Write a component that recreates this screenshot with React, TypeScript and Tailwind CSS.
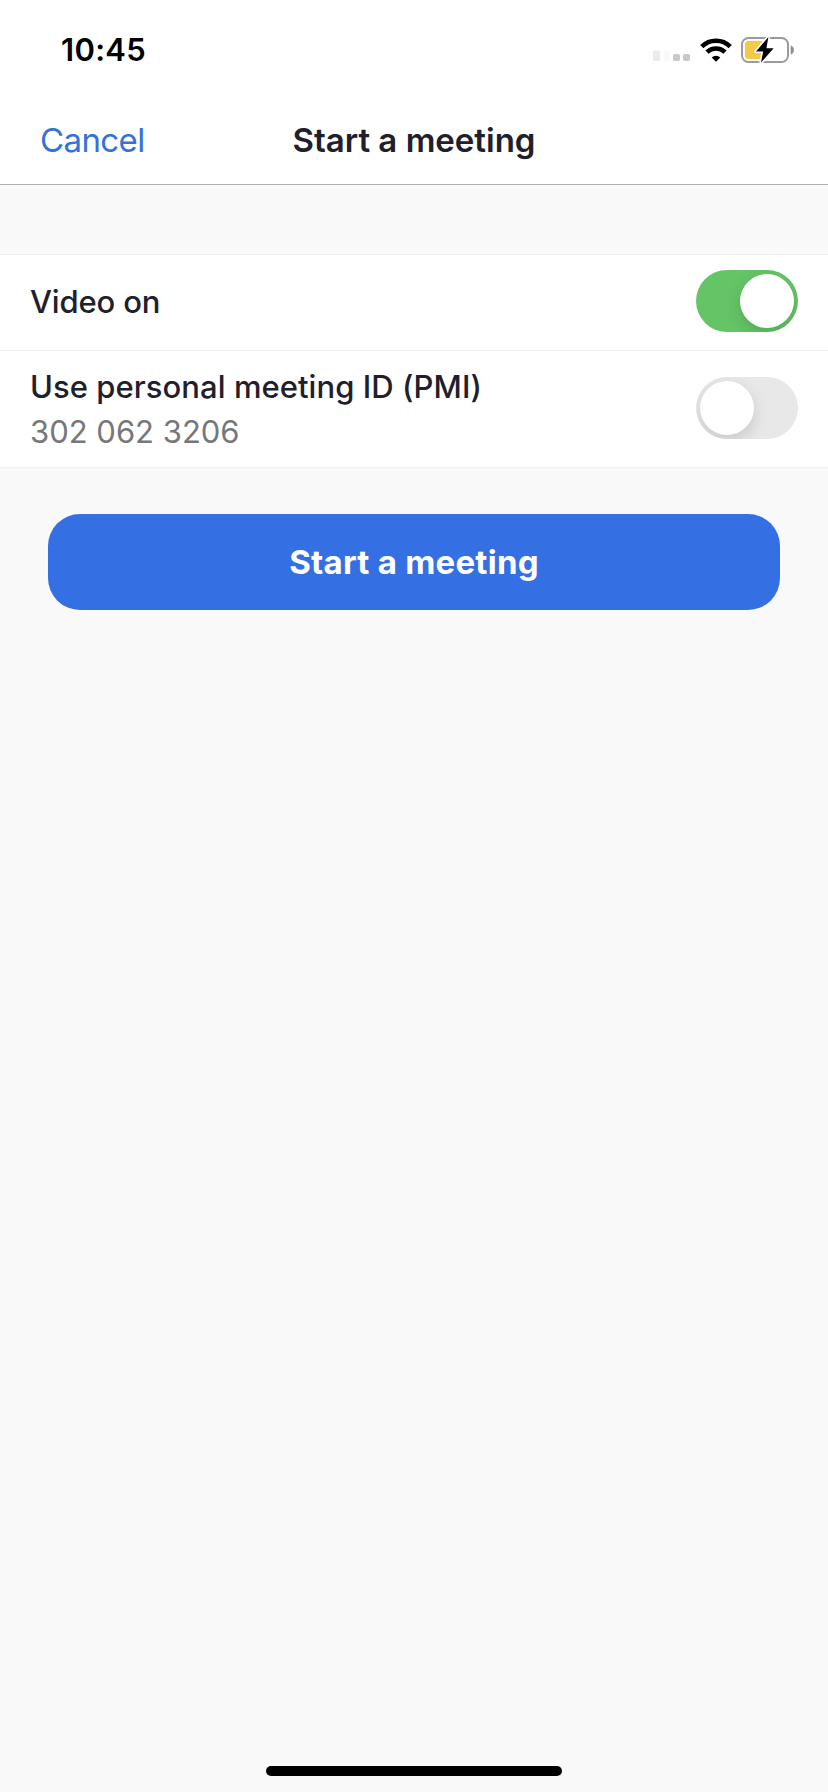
import clsx from "clsx";

function SignalIcon() {
  return (
    <svg width="38" height="12" viewBox="0 0 38 12" className="shrink-0">
      <rect x="0" y="0.5" width="7" height="10.5" rx="1.5" fill="#ebebeb" />
      <rect x="11" y="1" width="5" height="10" rx="1.5" fill="#f8f8f8" />
      <rect x="20" y="4" width="7" height="7" rx="2" fill="#c8c8c8" />
      <rect x="30" y="4" width="7" height="7" rx="2" fill="#c8c8c8" />
    </svg>
  );
}

function WifiIcon() {
  return (
    <svg width="32" height="24" viewBox="0 0 32 24" className="shrink-0">
      <g fill="none" stroke="#000" strokeWidth="4.6">
        <path d="M1.8 8.6 A20.2 20.2 0 0 1 30.2 8.6" />
        <path d="M7 14.2 A12.8 12.8 0 0 1 25 14.2" />
      </g>
      <path d="M16 23.8 L11.7 19.4 A6.2 6.2 0 0 1 20.3 19.4 Z" fill="#000" />
    </svg>
  );
}

function BatteryIcon() {
  return (
    <svg width="54" height="26" viewBox="0 0 54 26" className="shrink-0">
      <rect x="1" y="1" width="46" height="24" rx="6.5" fill="#fff" stroke="#9a9a9a" strokeWidth="2" />
      <path d="M50 8.8 A4.6 4.6 0 0 1 50 17.2 Z" fill="#8e8e8e" stroke="#8e8e8e" strokeWidth="0.6" />
      <path d="M7 4 H21 V22 H7 A3 3 0 0 1 4 19 V7 A3 3 0 0 1 7 4 Z" fill="#f5c944" />
      <path
        d="M27.4 0 L15 14.4 H22.2 L20 25.6 L32.6 11.2 H25.4 Z"
        fill="#000"
        stroke="#fff"
        strokeWidth="3.4"
        paintOrder="stroke"
        strokeLinejoin="round"
      />
    </svg>
  );
}

function Toggle({ checked, label }: { checked: boolean; label: string }) {
  return (
    <button
      type="button"
      role="switch"
      aria-checked={checked}
      aria-label={label}
      className={clsx(
        "flex h-[62px] w-[102px] shrink-0 items-center overflow-hidden rounded-full p-1",
        checked ? "justify-end bg-[#65c466]" : "justify-start bg-[#e8e8e8]"
      )}
    >
      <span className="size-[54px] rounded-full bg-white shadow-[0_6px_16px_rgba(0,0,0,0.14)]" />
    </button>
  );
}

export default function App() {
  return (
    <div className="flex h-[1792px] w-[828px] flex-col bg-[#f9f9f9] font-['Inter','Liberation_Sans',sans-serif] text-[#20202c]">
      <header className="h-[185px] border-b border-[#aeaeb0] bg-white">
        <div className="flex h-[99px] items-center justify-between pr-[33px] pl-[61px]">
          <span className="pt-px text-[31px] font-semibold tracking-[0.3px] text-black">10:45</span>
          <div className="flex items-center">
            <div className="mt-[13px] mr-[9px]">
              <SignalIcon />
            </div>
            <WifiIcon />
            <div className="ml-[9px]">
              <BatteryIcon />
            </div>
          </div>
        </div>
        <div className="grid h-[83px] grid-cols-[1fr_auto_1fr] items-center px-10">
          <button type="button" className="justify-self-start text-[33px] tracking-[-0.6px] text-[#3471dc]">
            Cancel
          </button>
          <h1 className="text-[33px] font-semibold">Start a meeting</h1>
        </div>
      </header>

      <ul className="mt-[69px] border-y border-[#efefef] bg-white">
        <li className="flex h-[95px] items-center justify-between pr-[30px] pl-[30px]">
          <p className="text-[31px] font-medium tracking-[-0.15px]">Video on</p>
          <div className="pb-[3px]">
            <Toggle checked label="Video on" />
          </div>
        </li>
        <li className="flex h-[117px] items-center justify-between border-t border-[#efefef] pr-[30px] pl-[30px]">
          <div>
            <p className="text-[31px] leading-[45px] font-medium tracking-[0.05px]">Use personal meeting ID (PMI)</p>
            <p className="text-[31px] leading-[45px] text-[#777779]">302 062 3206</p>
          </div>
          <div className="pb-[2px]">
            <Toggle checked={false} label="Use personal meeting ID (PMI)" />
          </div>
        </li>
      </ul>

      <button
        type="button"
        className="mx-12 mt-[46px] h-24 rounded-[32px] bg-[#3470e4] pt-[2px] text-[33px] font-bold tracking-[0.25px] text-white"
      >
        Start a meeting
      </button>

      <div className="mx-auto mt-auto mb-4 h-[10px] w-[296px] rounded-full bg-black" />
    </div>
  );
}
